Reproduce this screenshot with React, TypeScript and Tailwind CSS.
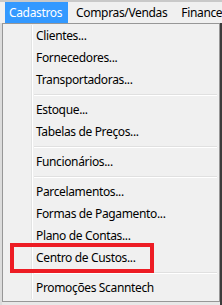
import React from 'react';

type Row = { label: string } | { sep: true };

const rows: Row[] = [
  { label: 'Clientes...' },
  { label: 'Fornecedores...' },
  { label: 'Transportadoras...' },
  { sep: true },
  { label: 'Estoque...' },
  { label: 'Tabelas de Preços...' },
  { sep: true },
  { label: 'Funcionários...' },
  { sep: true },
  { label: 'Parcelamentos...' },
  { label: 'Formas de Pagamento...' },
  { label: 'Plano de Contas...' },
  { label: 'Centro de Custos...' },
  { sep: true },
  { label: 'Promoções Scanntech' },
];

const App: React.FC = () => {
  return (
    <div
      className="relative w-[222px] h-[305px] overflow-hidden bg-[#e8e8e8] text-[12px] tracking-[-0.35px] text-black"
      style={{ fontFamily: '"Noto Sans", "Open Sans", sans-serif' }}
    >
      {/* Menu bar */}
      <div className="h-[23px] bg-[#f0f0f0] border-t-2 border-[#c9c9c9] flex items-stretch pl-[5px]">
        <div className="bg-[#3399ff] text-white pl-[4px] pr-[6px] flex items-center leading-none">Cadastros</div>
        <div className="pl-[8px] pr-[6px] flex items-center leading-none">Compras/Vendas</div>
        <div className="pl-[8px] flex items-center leading-none whitespace-nowrap">Finance</div>
      </div>

      <div className="flex h-[282px]">
        {/* left edge */}
        <div className="w-[2px] bg-[#dcdcdc]" />

        {/* Dropdown */}
        <div className="w-[218px] h-[279px] bg-[#f0f0f0] border border-[#979797] pt-[1px] pb-[2px] pr-[2px]">
          {rows.map((row, i) =>
            'sep' in row ? (
              <div key={i} className="flex h-[8px]">
                <div className="w-[29px] border-r border-[#e2e3e3]" />
                <div className="w-[1px] bg-white" />
                <div className="flex-1 flex flex-col justify-center pl-[1px]">
                  <div className="h-[1px] bg-[#e0e0e0]" />
                  <div className="h-[1px] bg-white" />
                </div>
              </div>
            ) : (
              <div key={i} className="flex h-[22px]">
                <div className="w-[29px] border-r border-[#e2e3e3]" />
                <div className="w-[1px] bg-white" />
                <div className="pl-[3px] leading-[22px] whitespace-nowrap">{row.label}</div>
              </div>
            )
          )}
        </div>

        {/* background window on the right */}
        <div className="flex-1 bg-[#3c3c3c]" />
      </div>

      {/* Annotation box */}
      <div className="absolute left-[10px] top-[243px] w-[144px] h-[30px] border-4 border-[#ed1c24]" />
    </div>
  );
};

export default App;
